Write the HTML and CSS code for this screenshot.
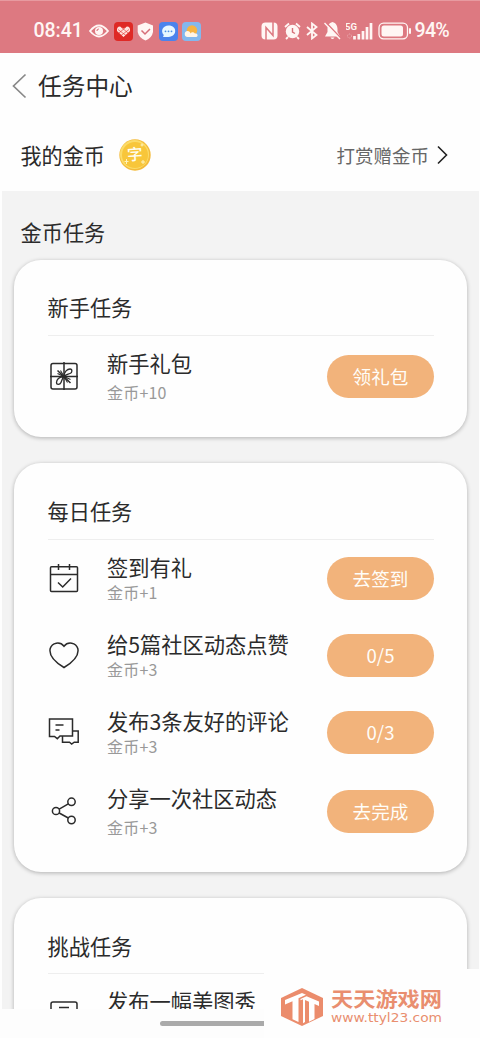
FILE: index.html
```html
<!DOCTYPE html>
<html lang="zh-CN">
<head>
<meta charset="utf-8">
<meta name="viewport" content="width=device-width, initial-scale=1">
<title>任务中心</title>
<link rel="stylesheet" href="styles.css">
</head>
<body>
<div class="screen">
  <header class="status">
    <span class="clock">08:41</span>
    <div class="status-left">
      <svg width="20" height="18" viewBox="0 0 20 18"><path d="M1 9Q10-2 19 9Q10 20 1 9Z" fill="none" stroke="#fff6f4" stroke-width="1.8"/><circle cx="10" cy="9" r="4" fill="#fff6f4"/><path d="M8 9a2 2 0 0 1 2-2" fill="none" stroke="#de7881" stroke-width="1.2"/></svg>
      <svg width="19" height="19" viewBox="0 0 19 19"><rect width="19" height="19" rx="4" fill="#df2925"/><path d="M9.500 15L3 9Q2.500 4.500 6 4.500L9.500 6.500 13 4.500Q16.500 4.500 16 9Z" fill="#ffe4df"/><path d="M4 7.500l8 6M7 5l7 6M15 7.500l-8 6M12 5l-7 6" stroke="#df2925" stroke-width=".6"/></svg>
      <svg width="17" height="19" viewBox="0 0 17 19"><path d="M8.500.5L16 3.500V10Q15 16 8.500 18.500Q2 16 .7 10V3.500Z" fill="#fff6f4"/><path d="M4.500 8.500l3.500 3.500 5-5" fill="none" stroke="#d66f78" stroke-width="1.500"/></svg>
      <svg width="19" height="19" viewBox="0 0 19 19"><rect width="19" height="19" rx="4" fill="#4b83ec"/><path d="M9.500 3.500c9 0 9 11 0 11.500H4l.8-2C1 9 4 3.500 9.500 3.500Z" fill="#e8f7ff"/><circle cx="6.500" cy="9.300" r=".9" fill="#4b8fe5"/><circle cx="9.500" cy="9.300" r=".9" fill="#4b8fe5"/><circle cx="12.500" cy="9.300" r=".9" fill="#4b8fe5"/></svg>
      <svg width="19" height="19" viewBox="0 0 19 19"><rect width="19" height="19" rx="4" fill="#83b8ee"/><circle cx="10" cy="8.500" r="5.200" fill="#f6b443"/><path d="M6 15a3 3 0 0 1-.5-6c2 0 2.500 1 3 2.500 1.500-2 3.500-1 4-.3 4 0 4 3.800 1 3.800Z" fill="#fff5e7"/></svg>
    </div>
    <div class="status-right">
      <svg width="17" height="18" viewBox="0 0 17 18"><rect x=".5" y=".5" width="16" height="17" rx="4" fill="#fff6f4"/><path d="M5 18V5.500l7 8V0" fill="none" stroke="#dd7981" stroke-width="1.500"/></svg>
      <svg width="17" height="18" viewBox="0 0 17 18"><circle cx="8.500" cy="9.500" r="6.700" fill="#fff6f4"/><path d="M1 5l4-3.500M16 5l-4-3.500M4 15l-2 2M13 15l2 2" stroke="#fff6f4" stroke-width="1.800"/><path d="M8.500 6v4l2.500 1.500" fill="none" stroke="#d66f78" stroke-width="1.400"/></svg>
      <svg width="12" height="18" viewBox="0 0 12 18"><path d="M1 5l9.500 8L6 16.500v-15L10.500 5 1 13" fill="none" stroke="#fff6f4" stroke-width="1.800"/></svg>
      <svg width="17" height="18" viewBox="0 0 17 18"><path d="M8.500 0C5 1 3.500 4 3.500 7v3L1 14.500h15L13.500 10V7c0-3-1.500-6-5-7ZM6.500 15.500h4q-2 3-4 0Z" fill="#fff6f4"/><path d="M1.500 0l15 16" stroke="#de7881" stroke-width="1.600"/><path d="M.5 1l15.500 16" stroke="#fff6f4" stroke-width="1.400"/></svg>
      <svg class="signal" width="28" height="18" viewBox="0 0 28 18"><text x="-1" y="8" textLength="12" lengthAdjust="spacingAndGlyphs" class="net">5G</text><circle cx="3.500" cy="14" r="2" fill="none" stroke="#eeb1b5" stroke-dasharray="1 1"/><path d="M8.500 14v3.500M12.800 12v5.500M17 9v8.500M21 5v12.500M25 1v16.500" stroke="#fff6f4" stroke-width="2.700"/></svg>
      <svg class="battery" width="34" height="18" viewBox="0 0 34 18"><rect x="1" y="1.200" width="28.500" height="15.600" rx="4.500" fill="none" stroke="#fff6f4" stroke-width="1.300"/><rect x="3.500" y="3.600" width="21.500" height="10.800" rx="2.500" fill="#fff6f4"/><path d="M32 7v4" stroke="#fff6f4" stroke-width="2" stroke-linecap="round"/></svg>
    </div>
    <span class="percent">94%</span>
  </header>

  <nav class="titlebar">
    <svg width="15" height="26" viewBox="0 0 15 26"><path d="M13.500 1.500L1.500 13l12 11.500" fill="none" stroke="#888" stroke-width="1.700"/></svg>
    <h1>任务中心</h1>
  </nav>

  <section class="wallet">
    <span class="wallet-label">我的金币</span>
    <svg width="32" height="32" viewBox="0 0 32 32"><circle cx="16" cy="16" r="15.700" fill="#f4bb3b"/><circle cx="15.500" cy="15.500" r="14.500" fill="#fbdc69"/><circle cx="16" cy="16" r="13" fill="#f8c63a"/><text x="16" y="21" class="coin-text" transform="rotate(-4 16 16)">字</text><path d="M7.500 20v5M5.500 22.500h4M24 21v4M22 23h4M23 4.500v3M21.500 6h3" stroke="#fff3bc" stroke-width="1"/></svg>
    <a class="reward">打赏赠金币</a>
    <svg width="11" height="20" viewBox="0 0 11 20"><path d="M1 1.500L9.500 10 1 18.500" fill="none" stroke="#222" stroke-width="1.600"/></svg>
  </section>

  <main class="content">
    <h2>金币任务</h2>
    <section class="card">
      <h3>新手任务</h3>
      <div class="task tall">
        <svg class="icon" viewBox="0 0 32 32"><rect x="3" y="3.500" width="26" height="25.500" rx="2"/><path d="M16 2v28M2 16.500h28M9.500 10.500l13 12.500"/><path d="M16 16.500c0-5 3.500-7.500 6-7.500 2.500 0 2.500 3.500 0 4.500s-4 1-6 3ZM16 16.500c-5 0-7.500 3.500-7.500 6 0 2.500 3.500 2.500 4.500 0s1-4 3-6Z" stroke-width="1.300"/><path d="M12.500 10.500L16 16.500l-6.500-3M19.500 22.500L16 16.500l6.500 3" stroke-width="1.100"/></svg>
        <div class="copy"><strong>新手礼包</strong><small>金币+10</small></div><button>领礼包</button>
      </div>
    </section>
    <section class="card daily">
      <h3>每日任务</h3>
      <div class="task">
        <svg class="icon" viewBox="0 0 32 32"><rect x="2.500" y="4.700" width="27" height="24.800" rx="1"/><path d="M2.500 12.500h27M10.500 2v6M21.500 2v6M10 20.500l4.700 4.500 8.300-8.500"/></svg>
        <div class="copy"><strong>签到有礼</strong><small>金币+1</small></div><button>去签到</button>
      </div>
      <div class="task">
        <svg class="icon" viewBox="0 0 32 32"><path d="M16 7.200C12 2 4 3.500 2.200 9.500C.5 17 7 23 16 28.500C25 23 31.500 17 29.800 9.500C28 3.500 20 2 16 7.200Z"/></svg>
        <div class="copy"><strong>给5篇社区动态点赞</strong><small>金币+3</small></div><button>0/5</button>
      </div>
      <div class="task">
        <svg class="icon" viewBox="0 0 32 32"><path d="M1.500 3h23v17H12l-2.700 2.700L6.500 20.500h-5ZM7.500 9h8M7.500 14h4M24.500 15h5.700v11.200h-4L23.700 28l-2.200-1.800h-7V20"/></svg>
        <div class="copy"><strong>发布3条友好的评论</strong><small>金币+3</small></div><button>0/3</button>
      </div>
      <div class="task tall">
        <svg class="icon" viewBox="0 0 32 32"><circle cx="8" cy="16" r="3.600"/><circle cx="23.500" cy="6.800" r="3.700"/><circle cx="23.500" cy="25" r="3.700"/><path d="M11.200 14.200l9.100-5.300M11.200 18l9.100 5"/></svg>
        <div class="copy"><strong>分享一次社区动态</strong><small>金币+3</small></div><button>去完成</button>
      </div>
    </section>
    <section class="card challenge">
      <h3>挑战任务</h3>
      <div class="task">
        <svg class="icon" viewBox="0 0 32 32"><rect x="3" y="5" width="26" height="25" rx="2"/><path d="M11 10.500h10"/></svg>
        <div class="copy"><strong>发布一幅美图秀</strong></div>
      </div>
    </section>
  </main>
  <footer class="home"><div class="home-bar"></div></footer>

  <aside class="brand">
    <svg width="44" height="38" viewBox="0 0 44 38"><path d="M22 0L43 10v18L22 38 1 28V10Z" fill="#eb8c6c"/><path d="M5 12L22 5l4 1.800-7.500 3.400V34l-6-2.800V13.300L5 16.500ZM20.500 11l6-2.800L39 13.500V18l-4.500-2v15l-5.500 2.700V13.700L25 12v22l-2 1.200V11.300l-2.500 1Z" fill="#fff"/></svg>
    <div class="brand-copy">
      <svg width="114" height="22" viewBox="0 0 114 22"><text x="1" y="18" textLength="111" lengthAdjust="spacingAndGlyphs" class="brand-name">天天游戏网</text></svg>
      <svg width="114" height="16" viewBox="0 0 114 16"><text x="1" y="11" textLength="111" lengthAdjust="spacingAndGlyphs" class="brand-url">www.ttyl23.com</text></svg>
    </div>
  </aside>
</div>
</body>
</html>
```
FILE: styles.css
```css
* { box-sizing: border-box; }
body { margin: 0; background: #fff; color: #2b2b2b; font-family: "Noto Sans CJK SC", sans-serif; }
svg { display: block; flex: none; }
h1, h2, h3 { margin: 0; font-weight: 400; }
.screen { position: relative; width: 480px; height: 1038px; overflow: hidden; background: #fefefe; }

.status { display: flex; align-items: center; height: 52.5px; padding: 9px 0 0 33.5px; background: #dd7981; border-top: 1px solid #e79aa0; color: #fff6f4; font: 500 19.6px/20px Roboto, sans-serif; }
.clock { width: 55.5px; letter-spacing: -.1px; }
.status-left { display: flex; align-items: center; gap: 4.5px; width: 172px; }
.status-right { display: flex; align-items: center; gap: 5.5px; width: 153.5px; }
.battery { margin-left: -1.5px; }
.percent { letter-spacing: -.7px; }
.net { font: 700 9.5px Roboto, sans-serif; fill: #fff6f4; }

.titlebar { display: flex; align-items: center; gap: 11.5px; height: 67.5px; padding: 0 0 1px 11.5px; }
.titlebar h1 { font-size: 23.7px; line-height: 34px; margin-top: -2px; }
.wallet { display: flex; align-items: center; height: 71px; padding-left: 20.5px; }
.wallet-label { width: 98.5px; font-size: 21.1px; line-height: 30px; margin-top: -2px; }
.wallet-label + svg { margin-top: -1px; }
.coin-text { font: 500 15.5px "Noto Sans CJK SC", sans-serif; fill: #fffdf0; text-anchor: middle; }
.reward { margin-left: auto; margin-right: 8px; color: #666; font-size: 18.5px; line-height: 28px; margin-top: -2px; }
.wallet .reward + svg { margin-right: 32px; margin-top: -1px; }

.content { height: 818px; margin: 0 1px 0 2px; padding: 0 12px; overflow: hidden; background: #f3f3f3; }
.content h2 { height: 69px; padding: 26px 0 0 6.5px; font-size: 21.2px; line-height: 30px; }
.card { height: 177px; margin-bottom: 26px; padding: 0 33px 0 34px; border-radius: 27px; background: #fefefe; box-shadow: 0 1px 4px rgba(0, 0, 0, .28); }
.card h3 { height: 76px; padding-top: 32px; border-bottom: 1px solid #eee; font-size: 21.2px; line-height: 30px; text-indent: -.5px; }
.daily { height: 409px; }
.daily h3 { height: 77px; padding-top: 33px; }
.challenge { height: 240px; }
.challenge h3 { padding-top: 33px; }
.task { display: grid; grid-template-columns: 59px 1fr 107px; align-items: center; height: 77px; }
.task.tall { height: 80px; }
.icon { width: 32px; height: 32px; margin-top: -1px; fill: none; stroke: #2b2b2b; stroke-width: 1.5; }
.copy { display: flex; flex-direction: column; white-space: nowrap; margin-top: -2px; }
.tall .copy { gap: 4px; margin-top: -1px; }
.copy strong { font-size: 21.25px; line-height: 30px; font-weight: 400; }
.copy small { font-size: 16px; line-height: 21px; letter-spacing: .2px; color: #999; }
.task button { height: 43px; margin: -1px 0 0; padding: 0; border: 0; border-radius: 22px; background: #f2b37b; color: #fffdf8; font: 400 18.6px/40px "Noto Sans CJK SC", sans-serif; }
.tall button { margin-top: 0; }
.challenge .task { align-items: start; padding-top: 14px; }
.challenge .icon { margin-top: 9px; }

.home { height: 29px; padding: 12px 0 0 160px; background: #fdfdfd; }
.home-bar { width: 120px; height: 5px; border-radius: 3px; background: #aaa; }
.brand { position: absolute; left: 264px; top: 969px; display: flex; gap: 6px; width: 216px; height: 69px; padding: 19px 0 0 16px; background: #fefefe; }
.brand-copy { display: flex; flex-direction: column; margin-top: 1px; }
.brand-name { font: 700 20px "Noto Sans CJK SC", sans-serif; fill: #e98e6f; }
.brand-url { font: 12.5px "DejaVu Sans", sans-serif; fill: #e98e6f; }
```
